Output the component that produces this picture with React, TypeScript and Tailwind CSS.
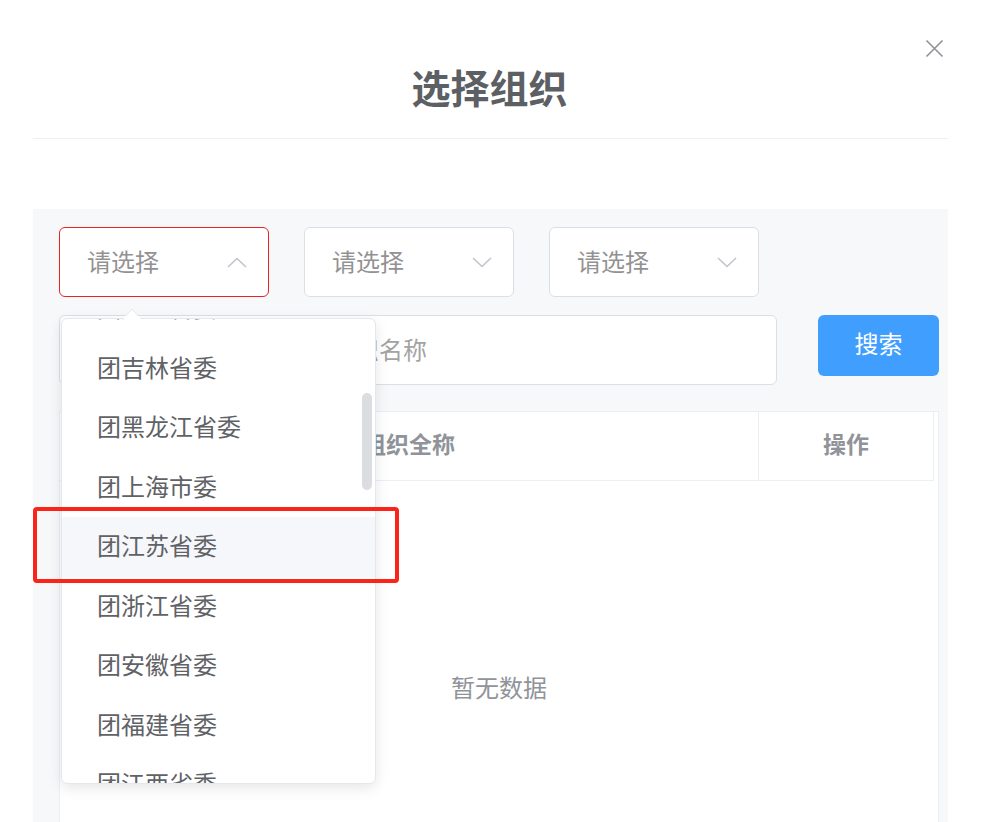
import React from 'react';

// ─── Dialog "选择组织" with the province dropdown open ──────────────────
const provinces = [
  '团辽宁省委',
  '团吉林省委',
  '团黑龙江省委',
  '团上海市委',
  '团江苏省委',
  '团浙江省委',
  '团安徽省委',
  '团福建省委',
  '团江西省委',
];

function Chevron({ up }: { up?: boolean }) {
  return (
    <svg width="20" height="11" viewBox="0 0 20 11" fill="none" className="shrink-0">
      <path
        d={up ? 'M1 10 L10 1.5 L19 10' : 'M1 1 L10 9.5 L19 1'}
        stroke="#c0c4cc"
        strokeWidth="1.6"
        strokeLinejoin="round"
      />
    </svg>
  );
}

function SelectBox({ open }: { open?: boolean }) {
  return (
    <div
      className={
        open
          ? 'w-[210px] h-[70px] rounded-[6px] bg-white border border-[#e62424] flex items-center justify-between pl-[27px] pr-[21px]'
          : 'w-[210px] h-[70px] rounded-[6px] bg-white border border-[#dcdfe6] flex items-center justify-between pl-[27px] pr-[21px]'
      }
    >
      <span className="text-[24px] leading-none text-[#929292] -mt-[3px]">请选择</span>
      <Chevron up={open} />
    </div>
  );
}

export default function App() {
  return (
    <div
      className="relative w-[983px] h-[822px] overflow-hidden bg-white"
      style={{ fontFamily: '"Noto Sans CJK SC", "Noto Sans", sans-serif' }}
    >
      {/* ── 标题栏 ── */}
      <div className="ml-[33px] w-[915px] h-[139px] border-b border-[#efefef] flex justify-center pt-[65px]">
        <h1 className="text-[39px] leading-[42px] font-bold text-[#5c5f63] -ml-[2px]">选择组织</h1>
      </div>
      <button className="absolute left-[924px] top-[38px] p-[1px]" aria-label="关闭">
        <svg width="19" height="19" viewBox="0 0 19 19" fill="none">
          <path d="M1.5 1.5 L17.5 17.5 M17.5 1.5 L1.5 17.5" stroke="#8f9196" strokeWidth="1.6" />
        </svg>
      </button>

      <div className="h-[70px]" />

      {/* ── 筛选 + 表格 ── */}
      <div className="ml-[33px] w-[915px] h-[613px] bg-[#f7f8fa] pl-[26px] pr-[9px] pt-[18px] flex flex-col">
        <div className="flex gap-[35px]">
          <SelectBox open />
          <SelectBox />
          <SelectBox />
        </div>

        <div className="flex items-start justify-between mt-[18px]">
          <div className="w-[718px] h-[70px] rounded-[6px] bg-white border border-[#dcdfe6] flex items-center pl-[31px]">
            <span className="text-[24px] leading-none text-[#a3a3a3] whitespace-nowrap -mt-[3px]">
              请输入要搜索的共青团组织名称
            </span>
          </div>
          <button className="w-[121px] h-[61px] rounded-[6px] bg-[#409eff] text-white text-[24px] leading-none pb-[5px]">
            搜索
          </button>
        </div>

        <div className="mt-[26px] flex-1 bg-white border-l border-r border-t border-[#ebeef5] flex flex-col">
          <div className="flex h-[69px] border-b border-[#ebeef5] mr-[4px] border-r">
            <div className="w-[699px] border-r border-[#ebeef5] flex items-center justify-center pb-[5px]">
              <span className="text-[23px] font-bold text-[#909399]">组织全称</span>
            </div>
            <div className="flex-1 flex items-center justify-center pb-[5px]">
              <span className="text-[23px] font-bold text-[#909399]">操作</span>
            </div>
          </div>
          <div className="flex justify-center pt-[193px]">
            <span className="text-[24px] leading-[26px] text-[#909399]">暂无数据</span>
          </div>
        </div>
      </div>

      {/* ── 下拉菜单 ── */}
      <svg
        className="absolute left-[123px] top-[308px] z-20"
        width="18"
        height="11"
        viewBox="0 0 18 11"
        fill="none"
      >
        <path d="M0 11 L9 1 L18 11 Z" fill="#ffffff" />
        <path d="M0.5 10.5 L9 1 L17.5 10.5" stroke="#e4e7ed" strokeWidth="1" />
      </svg>
      <div className="absolute left-[61px] top-[318px] w-[315px] h-[466px] z-10 bg-white border border-[#e4e7ed] rounded-[6px] shadow-[0_4px_14px_rgba(0,0,0,0.1)] overflow-hidden">
        <ul className="-mt-[40px]">
          {provinces.map((p) => (
            <li
              key={p}
              className={
                p === '团江苏省委'
                  ? 'h-[59.5px] flex items-center pl-[35px] bg-[#f5f7fa] text-[24px] text-[#606266]'
                  : 'h-[59.5px] flex items-center pl-[35px] text-[24px] text-[#606266]'
              }
            >
              <span className="-mt-[3px]">{p}</span>
            </li>
          ))}
        </ul>
        <div className="absolute left-[300px] top-[74px] w-[10px] h-[97px] rounded-full bg-[#dcdde0]" />
      </div>
      <svg className="absolute left-[124px] top-[316px] z-20" width="16" height="4">
        <rect width="16" height="4" fill="#ffffff" />
      </svg>

      {/* ── 标注框 ── */}
      <div className="absolute left-[33px] top-[507px] w-[366px] h-[76px] border-[4px] border-[#fa2418] rounded-[4px] z-30" />
    </div>
  );
}
